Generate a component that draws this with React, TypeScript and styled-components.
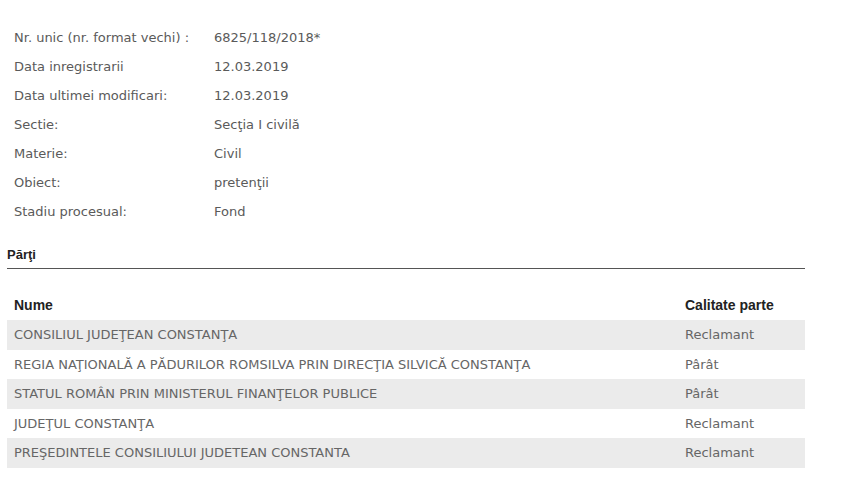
import React from 'react';
import styled, { createGlobalStyle } from 'styled-components';

const GlobalStyle = createGlobalStyle`
body {
  margin: 0;
  background: #fff;
  font-family: "DejaVu Sans", sans-serif;
}
`;

const Page = styled.div`
width: 798px;
padding: 23px 0 0 7px;
`;

const InfoGrid = styled.div`
display: grid;
grid-template-columns: 200px 1fr;
grid-auto-rows: 29px;
align-items: center;
padding-left: 7px;
font-size: 13px;
color: #5a5a5a;
`;

const SectionTitle = styled.h3`
margin: 21px 0 0;
padding-bottom: 5px;
border-bottom: 1px solid #555;
font-family: "Liberation Sans", Arial, sans-serif;
font-size: 13px;
line-height: 16px;
font-weight: bold;
color: #222;
`;

const Table = styled.table`
width: 100%;
margin-top: 20px;
border-collapse: collapse;
table-layout: fixed;
font-size: 13px;
`;

const HeadCell = styled.th<{ $width?: number }>`
width: ${({ $width }) => ($width ? `${$width}px` : 'auto')};
height: 31px;
padding: 0 7px;
text-align: left;
font-family: "Liberation Sans", Arial, sans-serif;
font-size: 14px;
font-weight: bold;
color: #222;
`;

const Row = styled.tr<{ $shaded: boolean }>`
height: 29.5px;
background: ${({ $shaded }) => ($shaded ? '#ebebeb' : 'transparent')};
`;

const Cell = styled.td`
padding: 0 7px;
color: #666;
white-space: nowrap;
`;

const info: [string, string][] = [
  ['Nr. unic (nr. format vechi) :', '6825/118/2018*'],
  ['Data inregistrarii', '12.03.2019'],
  ['Data ultimei modificari:', '12.03.2019'],
  ['Sectie:', 'Secţia I civilă'],
  ['Materie:', 'Civil'],
  ['Obiect:', 'pretenţii'],
  ['Stadiu procesual:', 'Fond'],
];

const parti: [string, string][] = [
  ['CONSILIUL JUDEŢEAN CONSTANŢA', 'Reclamant'],
  ['REGIA NAŢIONALĂ A PĂDURILOR ROMSILVA PRIN DIRECŢIA SILVICĂ CONSTANŢA', 'Pârât'],
  ['STATUL ROMÂN PRIN MINISTERUL FINANŢELOR PUBLICE', 'Pârât'],
  ['JUDEŢUL CONSTANŢA', 'Reclamant'],
  ['PREŞEDINTELE CONSILIULUI JUDETEAN CONSTANTA', 'Reclamant'],
];

const App: React.FC = () => (
  <Page>
    <GlobalStyle />
    <InfoGrid>
      {info.map(([label, value]) => (
        <React.Fragment key={label}>
          <span>{label}</span>
          <span>{value}</span>
        </React.Fragment>
      ))}
    </InfoGrid>
    <SectionTitle>Părţi</SectionTitle>
    <Table>
      <thead>
        <tr>
          <HeadCell $width={657}>Nume</HeadCell>
          <HeadCell>Calitate parte</HeadCell>
        </tr>
      </thead>
      <tbody>
        {parti.map(([nume, calitate], i) => (
          <Row key={nume} $shaded={i % 2 === 0}>
            <Cell>{nume}</Cell>
            <Cell>{calitate}</Cell>
          </Row>
        ))}
      </tbody>
    </Table>
  </Page>
);

export default App;
